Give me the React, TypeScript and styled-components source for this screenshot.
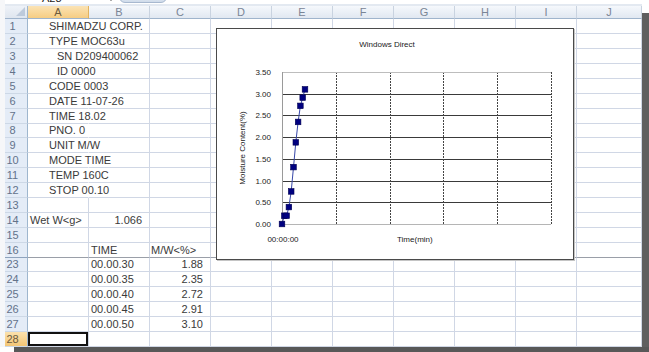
import React from 'react';
import styled, { createGlobalStyle } from 'styled-components';

const Global = createGlobalStyle`
  html, body { margin: 0; padding: 0; background: #fff; }
  body { width: 649px; height: 352px; overflow: hidden; font-family: "Liberation Sans", Arial, sans-serif; }
`;

const COLS = '23px repeat(9, 61px) 65px';
const ROW_H = 14.9;

const Frame = styled.div`
  display: grid;
  grid-template-columns: 642px 7px;
  grid-template-rows: 347px 5px;
  width: 649px;
  height: 352px;
`;

const Workspace = styled.div`
  display: flex;
  overflow: hidden;
  background: #fff;
`;

const LeftGap = styled.div`
  width: 5px;
  flex: none;
  background: #f6f7f9;
`;

const Sheet = styled.div`
  position: relative;
  flex: 1;
  display: flex;
  flex-direction: column;
  min-width: 0;
`;

const FormulaStrip = styled.div`
  height: 6px;
  display: flex;
  align-items: flex-end;
  overflow: hidden;
  background: #fff;
  font-size: 11px;
  color: #222;
`;

const NameBox = styled.span`
  width: 67px;
  margin-left: 37px;
  line-height: 12px;
  flex: none;
`;

const DropArrow = styled.span`
  width: 0;
  height: 0;
  margin: 0 6px 3px 0;
  border-left: 2px solid transparent;
  border-right: 2px solid transparent;
  border-top: 3px solid #111;
  flex: none;
`;

const FxPill = styled.div`
  width: 48px;
  height: 10px;
  margin-bottom: 1px;
  border: 1px solid #a7b8cf;
  border-radius: 0 0 6px 6px;
  background: linear-gradient(#eef3f9, #cfdbea);
  display: flex;
  align-items: flex-end;
  justify-content: flex-end;
  padding-right: 9px;
  box-sizing: border-box;
  font-style: italic;
  font-size: 8px;
  line-height: 8px;
  color: #334;
  flex: none;
`;

const Separator = styled.div`
  height: 3px;
  background: #e3e9f1;
`;

const HeaderRow = styled.div`
  display: grid;
  grid-template-columns: ${COLS};
  height: 16px;
`;

const HeaderCell = styled.div<{ $active?: boolean }>`
  box-sizing: border-box;
  border-right: 1px solid ${p => (p.$active ? '#e2b35e' : '#c9d3e0')};
  border-bottom: 1px solid #9fb4cc;
  background: ${p => (p.$active ? 'linear-gradient(#fbe3b4, #f6cd83)' : 'linear-gradient(#f5f8fc, #e1e8f1)')};
  color: ${p => (p.$active ? '#6b5a3e' : '#7a8596')};
  font-size: 11px;
  display: flex;
  align-items: center;
  justify-content: center;
`;

const Corner = styled.div`
  box-sizing: border-box;
  border-right: 1px solid #9eb6ce;
  border-bottom: 1px solid #9fb4cc;
  background: linear-gradient(#eef2f8, #dfe6ef);
  display: flex;
  align-items: flex-end;
  justify-content: flex-end;
  padding: 0 2px 2px 0;
`;

const CornerMark = styled.span`
  width: 0;
  height: 0;
  border-left: 9px solid transparent;
  border-bottom: 9px solid #bdcadb;
`;

const Row = styled.div<{ $h: number }>`
  display: grid;
  grid-template-columns: ${COLS};
  height: ${p => p.$h}px;
  flex: none;
`;

const RowHead = styled.div<{ $active?: boolean; $hiddenAfter?: boolean }>`
  box-sizing: border-box;
  border-right: 1px solid #9eb6ce;
  border-bottom: 1px solid ${p => (p.$hiddenAfter ? '#8ea3bd' : '#cdd8e6')};
  background: ${p => (p.$active ? 'linear-gradient(#fbe1ad, #f4c675)' : '#e4ecf7')};
  color: ${p => (p.$active ? '#6b5a3e' : '#63728a')};
  font-size: 11px;
  display: flex;
  align-items: center;
  justify-content: center;
  padding-right: 7px;
`;

const Cell = styled.div<{ $align?: 'left' | 'right'; $pad?: number; $spill?: boolean; $hiddenAfter?: boolean; $selected?: boolean }>`
  box-sizing: border-box;
  border-right: 1px solid ${p => (p.$spill ? 'transparent' : '#d0d7e5')};
  border-bottom: 1px solid ${p => (p.$hiddenAfter ? '#9a9fa8' : '#d0d7e5')};
  font-size: 11px;
  color: #3a3a3a;
  white-space: nowrap;
  overflow: visible;
  display: flex;
  align-items: center;
  justify-content: ${p => (p.$align === 'right' ? 'flex-end' : 'flex-start')};
  padding-left: ${p => (p.$align === 'right' ? 0 : p.$pad ?? 2)}px;
  padding-right: ${p => (p.$align === 'right' ? 7 : 0)}px;
  box-shadow: ${p => (p.$selected ? 'inset 0 0 0 2px #111' : 'none')};
  position: relative;
  z-index: ${p => (p.$spill ? 1 : 0)};
`;

const ChartBox = styled.div`
  position: absolute;
  left: 211px;
  top: 28px;
  width: 358px;
  height: 232px;
  box-sizing: border-box;
  border: 1px solid #4a4a4a;
  background: #fff;
  box-shadow: 1px 1px 0 #c4c4c4;
  z-index: 2;
`;

const RightRail = styled.div`
  display: flex;
  flex-direction: column;
`;

const RailTop = styled.div`
  height: 13px;
  background: #fff;
`;

const RailShade = styled.div`
  flex: 1;
  background: #5f5f5f;
`;

const BottomRail = styled.div`
  grid-column: 1 / span 2;
  display: flex;
`;

const BottomGap = styled.div`
  width: 14px;
  background: #fff;
`;

const BottomShade = styled.div`
  flex: 1;
  background: #585858;
`;

type CellDef = { t: string; align?: 'left' | 'right'; pad?: number; spill?: boolean };
type RowDef = { n: string; cells: Record<number, CellDef>; hiddenAfter?: boolean };

const info = (t: string, pad = 21): Record<number, CellDef> => ({ 0: { t, pad, spill: true } });

const rows: RowDef[] = [
  { n: '1', cells: info('SHIMADZU CORP.') },
  { n: '2', cells: info('TYPE MOC63u') },
  { n: '3', cells: info('SN D209400062', 29) },
  { n: '4', cells: info('ID 0000', 29) },
  { n: '5', cells: info('CODE 0003') },
  { n: '6', cells: info('DATE 11-07-26') },
  { n: '7', cells: info('TIME 18.02') },
  { n: '8', cells: info('PNO. 0') },
  { n: '9', cells: info('UNIT M/W') },
  { n: '10', cells: info('MODE TIME') },
  { n: '11', cells: info('TEMP 160C') },
  { n: '12', cells: info('STOP 00.10') },
  { n: '13', cells: {} },
  { n: '14', cells: { 0: { t: 'Wet W<g>', pad: 2 }, 1: { t: '1.066', align: 'right' } } },
  { n: '15', cells: {} },
  { n: '16', cells: { 1: { t: 'TIME' }, 2: { t: 'M/W<%>', pad: 1 } }, hiddenAfter: true },
  { n: '23', cells: { 1: { t: '00.00.30' }, 2: { t: '1.88', align: 'right' } } },
  { n: '24', cells: { 1: { t: '00.00.35' }, 2: { t: '2.35', align: 'right' } } },
  { n: '25', cells: { 1: { t: '00.00.40' }, 2: { t: '2.72', align: 'right' } } },
  { n: '26', cells: { 1: { t: '00.00.45' }, 2: { t: '2.91', align: 'right' } } },
  { n: '27', cells: { 1: { t: '00.00.50' }, 2: { t: '3.10', align: 'right' } } },
];

const letters = ['A', 'B', 'C', 'D', 'E', 'F', 'G', 'H', 'I', 'J'];

const PL = 65, PT = 43, PR = 334, PB = 195;
const STEP_Y = (PB - PT) / 7;
const STEP_X = (PR - PL) / 5;
const values = [0, 0.19, 0.19, 0.39, 0.75, 1.31, 1.88, 2.35, 2.72, 2.91, 3.1];
const pts = values.map((v, i) => [PL + i * 2.3, PB - v * (STEP_Y * 2)] as const);

function Chart() {
  const yLabels = ['3.50', '3.00', '2.50', '2.00', '1.50', '1.00', '0.50', '0.00'];
  return (
    <ChartBox>
      <svg width="356" height="230" viewBox="0 0 356 230" fontFamily='"Liberation Sans", Arial, sans-serif'>
        <text x="170" y="18" fontSize="8" textAnchor="middle" fill="#222">Windows Direct</text>
        {[1, 2, 3, 4, 5, 6].map(k => (
          <line key={k} x1={PL} x2={PR} y1={Math.round(PT + k * STEP_Y) + 0.5} y2={Math.round(PT + k * STEP_Y) + 0.5} stroke="#3a3a3a" strokeWidth="1" shapeRendering="crispEdges" />
        ))}
        {[1, 2, 3, 4, 5].map(j => (
          <line key={j} x1={Math.round(PL + j * STEP_X) + 0.5} x2={Math.round(PL + j * STEP_X) + 0.5} y1={PT} y2={PB} stroke="#444" strokeWidth="1" strokeDasharray="2 1" shapeRendering="crispEdges" />
        ))}
        <line x1={PL} x2={PR} y1={PT + 0.5} y2={PT + 0.5} stroke="#bdbdbd" shapeRendering="crispEdges" />
        <line x1={PL} x2={PR} y1={PB + 0.5} y2={PB + 0.5} stroke="#b5b5b5" shapeRendering="crispEdges" />
        <line x1={PL + 0.5} x2={PL + 0.5} y1={PT} y2={PB} stroke="#9a9a9a" shapeRendering="crispEdges" />
        {yLabels.map((l, k) => (
          <text key={l} x="54" y={PT + k * STEP_Y + 3} fontSize="8" textAnchor="end" fill="#222">{l}</text>
        ))}
        <text transform="translate(27.5 119) rotate(-90)" fontSize="8" textAnchor="middle" fill="#222">Moisture Content(%)</text>
        <text x="66" y="213" fontSize="8" textAnchor="middle" fill="#222">00:00:00</text>
        <text x="180" y="213" fontSize="8" fill="#222">Time(min)</text>
        <polyline points={pts.map(p => p.join(',')).join(' ')} fill="none" stroke="#3747a8" strokeWidth="1" />
        {pts.map(([x, y], i) => (
          <rect key={i} x={x - 2.8} y={y - 2.8} width="5.6" height="5.6" fill="#000080" stroke="#000050" strokeWidth="0.6" />
        ))}
      </svg>
    </ChartBox>
  );
}

export default function App() {
  return (
    <>
      <Global />
      <Frame>
        <Workspace>
          <LeftGap />
          <Sheet>
            <FormulaStrip>
              <NameBox>A28</NameBox>
              <DropArrow />
              <FxPill>fx</FxPill>
            </FormulaStrip>
            <Separator />
            <HeaderRow>
              <Corner><CornerMark /></Corner>
              {letters.map((l, i) => (
                <HeaderCell key={l} $active={i === 0}>{l}</HeaderCell>
              ))}
            </HeaderRow>
            {rows.map(r => (
              <Row key={r.n} $h={ROW_H}>
                <RowHead $hiddenAfter={r.hiddenAfter}>{r.n}</RowHead>
                {letters.map((l, i) => {
                  const c = r.cells[i];
                  return (
                    <Cell key={l} $align={c?.align} $pad={c?.pad} $spill={c?.spill} $hiddenAfter={r.hiddenAfter}>
                      {c?.t}
                    </Cell>
                  );
                })}
              </Row>
            ))}
            <Row $h={15}>
              <RowHead $active>28</RowHead>
              {letters.map((l, i) => (
                <Cell key={l} $selected={i === 0} />
              ))}
            </Row>
            <Chart />
          </Sheet>
        </Workspace>
        <RightRail>
          <RailTop />
          <RailShade />
        </RightRail>
        <BottomRail>
          <BottomGap />
          <BottomShade />
        </BottomRail>
      </Frame>
    </>
  );
}
